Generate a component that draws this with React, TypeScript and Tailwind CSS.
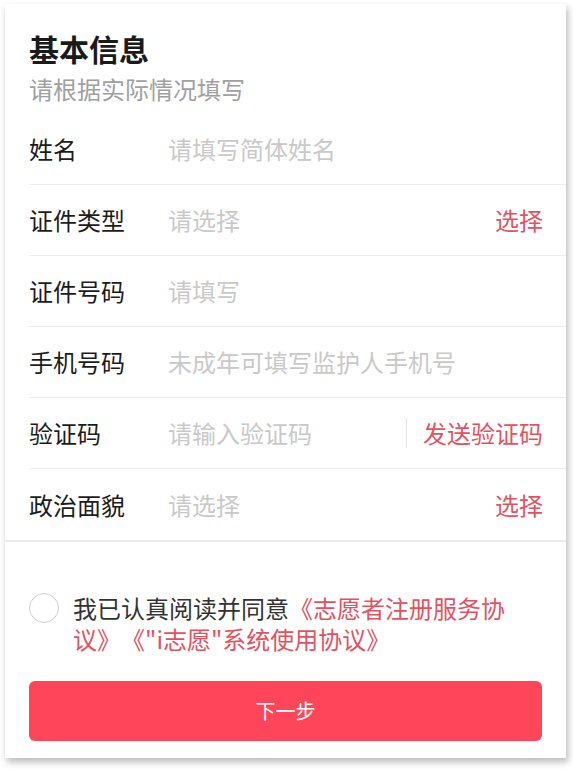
const FONT = '"Noto Sans CJK SC", "Noto Sans", sans-serif';

type Row = {
  label: string;
  placeholder: string;
  action?: string;
  divided?: boolean;
};

const rows: Row[] = [
  { label: "姓名", placeholder: "请填写简体姓名" },
  { label: "证件类型", placeholder: "请选择", action: "选择" },
  { label: "证件号码", placeholder: "请填写" },
  { label: "手机号码", placeholder: "未成年可填写监护人手机号" },
  { label: "验证码", placeholder: "请输入验证码", action: "发送验证码", divided: true },
  { label: "政治面貌", placeholder: "请选择", action: "选择" }
];

function FormRow({ label, placeholder, action, divided, last }: Row & { last: boolean }) {
  return (
    <div
      className={`ml-[24px] flex h-[71px] items-center pr-[23px] ${
        last ? "" : "border-b border-[#ededed]"
      }`}
    >
      <span className="w-[139px] shrink-0 text-[24px] leading-[32px] text-[#1c1c1c]">{label}</span>
      <span className="flex-1 text-[24px] leading-[32px] text-[#c9c9c9]">{placeholder}</span>
      {action && (
        <div className="flex items-center">
          {divided && <span className="mr-[16px] h-[30px] w-px bg-[#e3e3e3]" />}
          <span className="text-[24px] leading-[32px] text-[#e4525f]">{action}</span>
        </div>
      )}
    </div>
  );
}

export default function App() {
  return (
    <div className="h-[773px] w-[573px] bg-white pt-[4px] pl-[5px]" style={{ fontFamily: FONT }}>
      <div className="flex h-[754px] w-[561px] flex-col bg-white shadow-[2px_4px_7px_rgba(0,0,0,0.28)]">
        <div className="pt-[24px]">
          <h1 className="pl-[24px] text-[30px] font-bold leading-[40px] text-[#1a1a1a]">基本信息</h1>
          <p className="mt-[6px] pl-[24px] text-[24px] leading-[30px] text-[#a0a0a0]">
            请根据实际情况填写
          </p>
          <div className="mt-[10px]">
            {rows.map((r, i) => (
              <FormRow key={r.label} {...r} last={i === rows.length - 1} />
            ))}
          </div>
        </div>

        <div className="flex flex-1 flex-col border-t-2 border-[#ebebeb] px-[24px] pt-[50px] pb-[17px]">
          <div className="flex items-start">
            <span className="mt-[1px] h-[30px] w-[30px] shrink-0 rounded-full border border-[#cfcfcf]" />
            <p className="ml-[14px] w-[446px] text-[24px] leading-[31px] text-[#333333] [text-spacing-trim:space-all]">
              我已认真阅读并同意
              <span className="text-[#e4525f]">《志愿者注册服务协议》《"i志愿"系统使用协议》</span>
            </p>
          </div>
          <button
            type="button"
            className="mt-auto h-[60px] w-full rounded-[6px] bg-[#fe455a] text-[20px] text-white"
          >
            下一步
          </button>
        </div>
      </div>
    </div>
  );
}
